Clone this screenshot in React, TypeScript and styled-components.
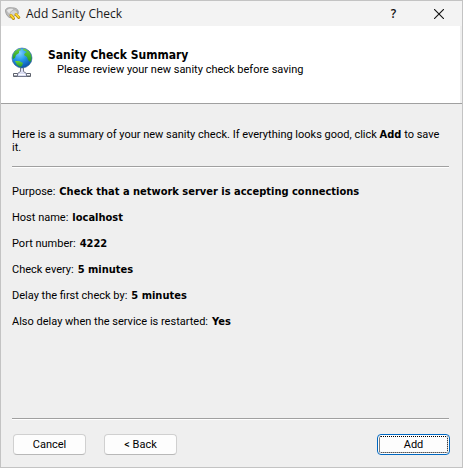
import React from "react";
import styled, { createGlobalStyle } from "styled-components";

const GlobalStyle = createGlobalStyle`
  * { box-sizing: border-box; }
  body { margin: 0; background: #efefef; }
`;

const uiFont = `"Tahoma", "Roboto", sans-serif`;
const boldFont = `"Tahoma", "DejaVu Sans Condensed", sans-serif`;
const captionFont = `"Segoe UI", "Open Sans", sans-serif`;

const Dialog = styled.div`
  display: flex;
  flex-direction: column;
  min-height: 100vh;
  border: 1px solid #c3c3c3;
  background: #efefef;
  color: #000;
  font: 11px/13px ${uiFont};
`;

const TitleBar = styled.header`
  display: flex;
  align-items: center;
  height: 25px;
  padding: 0 1px 0 4px;
  background: #f3f3f3;
`;

const Title = styled.h1`
  flex: 1;
  margin: 0 0 0 5px;
  font: 400 12px/16px ${captionFont};
  color: #1a1a1a;
`;

const TitleButton = styled.button`
  display: flex;
  align-items: center;
  justify-content: center;
  width: 45px;
  height: 24px;
  padding: 0;
  border: 0;
  background: transparent;
  font: 600 12px/16px ${captionFont};
  color: #111;
`;

const Banner = styled.section`
  height: 78px;
  border-bottom: 1px solid #a0a0a0;
`;

const BannerContent = styled.div`
  display: flex;
  height: 100%;
  margin-right: 2px;
  padding: 21px 10px 0;
  background: #fff;
`;

const BannerText = styled.div`
  margin-left: 15px;
`;

const Heading = styled.h2`
  margin: 0;
  font: 700 12px/16px ${boldFont};
`;

const Subheading = styled.p`
  margin: 0 0 0 9px;
`;

const Strong = styled.strong`
  font: 700 11px/13px ${boldFont};
`;

const Body = styled.main`
  flex: 1;
  padding: 24px 13px 0 11px;
`;

const Intro = styled.p`
  margin: 0;
`;

const Divider = styled.hr`
  height: 2px;
  margin: 12px 0 0;
  border: 0;
  border-top: 1px solid #a0a0a0;
  background: #fff;
`;

const Summary = styled.dl`
  display: grid;
  gap: 13px;
  margin: 17px 0 0;
`;

const Row = styled.div`
  display: flex;
  gap: 4px;
`;

const Term = styled.dt``;

const Value = styled.dd`
  margin: 0;
  font: 700 11px/13px ${boldFont};
`;

const Footer = styled.footer`
  padding: 0 0 12px;
`;

const FooterRule = styled(Divider)`
  margin: 0 13px 0 11px;
`;

const Actions = styled.div`
  display: flex;
  gap: 18px;
  margin: 14px 12px 0;
`;

const Button = styled.button<{ $primary?: boolean }>`
  width: 73px;
  height: 21px;
  padding: 0;
  border: 1px solid ${(p) => (p.$primary ? "#0067c0" : "#d0d0d0")};
  border-bottom-color: ${(p) => (p.$primary ? "#0067c0" : "#b8b8b8")};
  border-radius: 4px;
  margin-left: ${(p) => (p.$primary ? "auto" : "0")};
  background: #fdfdfd;
  color: #000;
  font: 11px/13px ${uiFont};
  outline: ${(p) => (p.$primary ? "1px dotted #000" : "none")};
  outline-offset: -3px;
`;

const PlugIcon = () => (
  <svg width="16" height="16" viewBox="0 0 16 16" aria-hidden="true">
    <path d="M.5 5C.3 2.500 2.500 1.700 5 1.700L9.500 2C12.500 2.600 13.600 4.500 13.300 7.500L6 12C3 11.500 .8 8.500 .5 5Z" fill="#bdbdbd" stroke="#959595" strokeWidth=".8" />
    <path d="M1.800 4.500C3.500 2.600 6.500 2.600 8.500 3.200L4.500 8Z" fill="#e8e8e8" />
    <path d="M4.800 8C5.500 4.500 9 3 11.500 4.500L12.800 7.500 6.500 11.500Z" fill="#d4d4d4" stroke="#a0a0a0" strokeWidth=".6" />
    <path d="M6 9.500L8.500 12.500M11 8.500L13.800 11.500" stroke="#b98b14" strokeWidth="3" strokeLinecap="round" />
    <path d="M6 9.200L8.300 12M11 8.200L13.600 11" stroke="#fbd72c" strokeWidth="1.800" strokeLinecap="round" />
  </svg>
);

const GlobeIcon = () => (
  <svg width="22" height="32" viewBox="0 0 22 32" aria-hidden="true">
    <defs>
      <radialGradient id="sea" cx="38%" cy="25%" r="75%">
        <stop offset="0" stopColor="#7fd0ff" />
        <stop offset=".5" stopColor="#2496e8" />
        <stop offset="1" stopColor="#0a55ae" />
      </radialGradient>
      <linearGradient id="land" x1="0" y1="0" x2="0" y2="1">
        <stop offset="0" stopColor="#6fd43c" />
        <stop offset="1" stopColor="#229a2a" />
      </linearGradient>
      <clipPath id="ball"><circle cx="11" cy="11" r="9.600" /></clipPath>
    </defs>
    <path d="M2.500 26.500H19.500V29.500H2.500Z" fill="#a8acb5" stroke="#5e626d" strokeWidth="1" />
    <path d="M9.500 20.500H12.500V24.500L15.500 26.500V29.500H6.500V26.500L9.500 24.500Z" fill="#dcdff4" stroke="#74788a" strokeWidth="1" />
    <path d="M8 27.500H14M3 27.500H6M16 27.500H19" stroke="#fff" />
    <circle cx="11" cy="11" r="10" fill="url(#sea)" stroke="#32658f" strokeWidth=".6" />
    <g clipPath="url(#ball)" fill="url(#land)">
      <path d="M1 8L3 4 6 2 9 1 10 3 8 4 8 6 5 8 4 11 2 12Z" />
      <path d="M12 1L16 1 22 6 22 12 19 15 17 13 16 10 13 8 14 6 16 5 12 3Z" />
      <path d="M4 14L8 14 12 16 11 19 9 20 6 18Z" />
    </g>
  </svg>
);

const rows = [
  ["Purpose:", "Check that a network server is accepting connections"],
  ["Host name:", "localhost"],
  ["Port number:", "4222"],
  ["Check every:", "5 minutes"],
  ["Delay the first check by:", "5 minutes"],
  ["Also delay when the service is restarted:", "Yes"],
];

export default function App() {
  return (
    <>
      <GlobalStyle />
      <Dialog role="dialog" aria-labelledby="dialog-title">
        <TitleBar>
          <PlugIcon />
          <Title id="dialog-title">Add Sanity Check</Title>
          <TitleButton type="button" aria-label="Help">?</TitleButton>
          <TitleButton type="button" aria-label="Close">
            <svg width="10" height="10" viewBox="0 0 10 10" aria-hidden="true">
              <path d="M0 0L10 10M10 0L0 10" stroke="#111" strokeWidth="1.100" />
            </svg>
          </TitleButton>
        </TitleBar>
        <Banner>
          <BannerContent>
            <GlobeIcon />
            <BannerText>
              <Heading>Sanity Check Summary</Heading>
              <Subheading>Please review your new sanity check before saving</Subheading>
            </BannerText>
          </BannerContent>
        </Banner>
        <Body>
          <Intro>
            Here is a summary of your new sanity check. If everything looks good, click <Strong>Add</Strong> to save it.
          </Intro>
          <Divider />
          <Summary>
            {rows.map(([label, value]) => (
              <Row key={label}>
                <Term>{label}</Term>
                <Value>{value}</Value>
              </Row>
            ))}
          </Summary>
        </Body>
        <Footer>
          <FooterRule />
          <Actions>
            <Button type="button">Cancel</Button>
            <Button type="button">&lt; Back</Button>
            <Button type="button" $primary>Add</Button>
          </Actions>
        </Footer>
      </Dialog>
    </>
  );
}
